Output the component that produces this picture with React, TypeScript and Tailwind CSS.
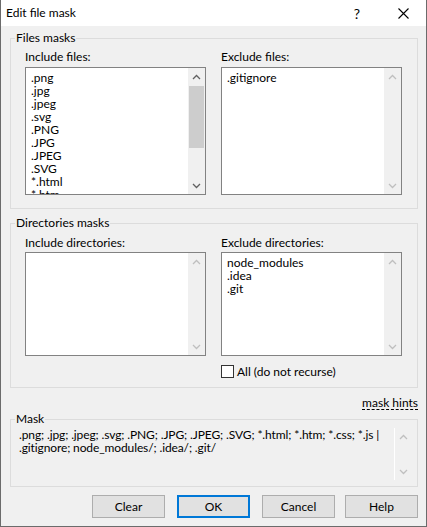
import React from "react";

// only what fits in the box (the last one is cut in half like the original)
const includeFiles = [".png", ".jpg", ".jpeg", ".svg", ".PNG", ".JPG", ".JPEG", ".SVG", "*.html", "*.htm"];
const excludeFiles = [".gitignore"];
const excludeDirs = ["node_modules", ".idea", ".git"];

function Chevron({ up, active }: { up: boolean; active: boolean }) {
  return (
    <svg width="9" height="6" viewBox="0 0 9 6" className="block">
      <polyline
        points={up ? "1,5 4.5,1.5 8,5" : "1,1 4.5,4.5 8,1"}
        fill="none"
        stroke={active ? "#606060" : "#bfbfbf"}
        strokeWidth="1.3"
      />
    </svg>
  );
}

function ScrollBar({ active, thumb }: { active: boolean; thumb?: boolean }) {
  return (
    <div className="w-[17px] h-full flex flex-col bg-[#f0f0f0]">
      <div className="h-[17px] flex items-center justify-center">
        <Chevron up active={active} />
      </div>
      <div className="flex-1 flex flex-col">
        {thumb && <div className="mt-[1px] h-[62px] bg-[#cdcdcd] mx-[1px]"></div>}
      </div>
      <div className="h-[17px] flex items-center justify-center">
        <Chevron up={false} active={active} />
      </div>
    </div>
  );
}

function ListBox({ items, height, active, thumb }: { items: string[]; height: string; active?: boolean; thumb?: boolean }) {
  return (
    <div className={`${height} w-[181px] border border-[#828282] bg-white flex`}>
      <div className="flex-1 overflow-hidden pl-[5px] pt-[3px] leading-[13px]">
        {items.map((item) => (
          <div key={item} className="whitespace-nowrap">
            {item}
          </div>
        ))}
      </div>
      <ScrollBar active={!!active} thumb={thumb} />
    </div>
  );
}

function Button({ label, primary }: { label: string; primary?: boolean }) {
  return (
    <button
      className={`w-[73px] h-[23px] bg-[#e1e1e1] flex items-center justify-center leading-none ${
        primary ? "border-2 border-[#0078d7]" : "border border-[#adadad]"
      }`}
    >
      {label}
    </button>
  );
}

export default function App() {
  return (
    <div className="w-[427px] h-[527px] border-x border-b border-[#6b6b6b] bg-[#f0f0f0] flex flex-col text-[12px] text-black font-['Lato',sans-serif]">
      {/* title bar */}
      <div className="h-[26px] bg-white flex items-center pl-[5px] shrink-0">
        <span className="flex-1">Edit file mask</span>
        <span className="text-[14px] mr-[38px]">?</span>
        <svg width="11" height="11" viewBox="0 0 11 11" className="mr-[17px]">
          <path d="M0.5 0.5 L10.5 10.5 M10.5 0.5 L0.5 10.5" stroke="#000" strokeWidth="1.1" />
        </svg>
      </div>

      <div className="pl-[9px] pr-[8px] flex flex-col">
        {/* Files masks */}
        <fieldset className="mt-[5px] border border-[#dcdcdc]">
          <legend className="ml-[4px] px-[1px] leading-[14px]">Files masks</legend>
          <div className="grid grid-cols-[181px_181px] gap-x-[15px] pl-[14px] pt-[5px] pb-[13px]">
            <div>
              <div className="leading-[14px] mb-[3px]">Include files:</div>
              <ListBox items={includeFiles} height="h-[128px]" active thumb />
            </div>
            <div>
              <div className="leading-[14px] mb-[3px]">Exclude files:</div>
              <ListBox items={excludeFiles} height="h-[128px]" />
            </div>
          </div>
        </fieldset>

        {/* Directories masks */}
        <fieldset className="mt-[7px] border border-[#dcdcdc]">
          <legend className="ml-[4px] px-[1px] leading-[14px]">Directories masks</legend>
          <div className="grid grid-cols-[181px_181px] gap-x-[15px] pl-[14px] pt-[6px] pb-[9px]">
            <div>
              <div className="leading-[14px] mb-[2px]">Include directories:</div>
              <ListBox items={[]} height="h-[104px]" />
            </div>
            <div>
              <div className="leading-[14px] mb-[2px]">Exclude directories:</div>
              <ListBox items={excludeDirs} height="h-[104px]" />
              <div className="flex items-center mt-[9px] h-[13px]">
                <div className="w-[13px] h-[13px] border border-[#333333] bg-white"></div>
                <span className="ml-[3px] leading-[13px]">All (do not recurse)</span>
              </div>
            </div>
          </div>
        </fieldset>

        {/* mask hints */}
        <div className="mt-[9px] h-[15px] flex justify-end">
          <span className="leading-[12px] h-[13px] border-b border-dashed border-black">mask hints</span>
        </div>

        {/* Mask */}
        <fieldset className="border border-[#dcdcdc]">
          <legend className="ml-[4px] px-[1px] leading-[14px]">Mask</legend>
          <div className="flex pl-[8px] pr-[6px] pt-[2px] h-[60px]">
            <div className="flex-1 leading-[13px] whitespace-nowrap tracking-[-0.12px]">
              <div>.png; .jpg; .jpeg; .svg; .PNG; .JPG; .JPEG; .SVG; *.html; *.htm; *.css; *.js |</div>
              <div>.gitignore; node_modules/; .idea/; .git/</div>
            </div>
            <div className="w-[17px] h-[52px] border-l border-white flex flex-col justify-between">
              <div className="h-[17px] flex items-center justify-center">
                <Chevron up active={false} />
              </div>
              <div className="h-[17px] flex items-center justify-center">
                <Chevron up={false} active={false} />
              </div>
            </div>
          </div>
        </fieldset>

        {/* buttons */}
        <div className="mt-[8px] flex justify-end">
          <Button label="Clear" />
          <div className="ml-[12px]">
            <Button label="OK" primary />
          </div>
          <div className="ml-[12px]">
            <Button label="Cancel" />
          </div>
          <div className="ml-[10px]">
            <Button label="Help" />
          </div>
        </div>
      </div>
    </div>
  );
}
